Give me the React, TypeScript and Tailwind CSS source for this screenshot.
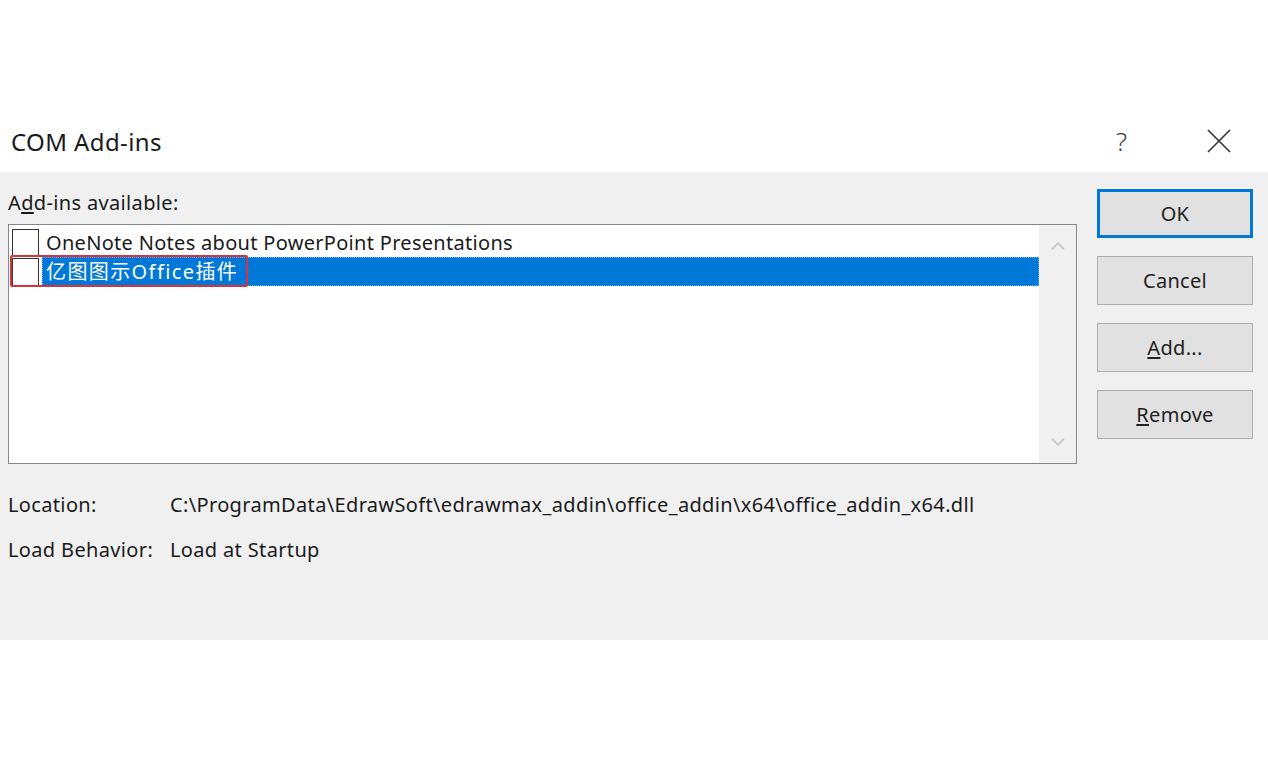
import { ChevronUp, ChevronDown } from 'lucide-react';

const font = { fontFamily: '"Noto Sans", "Noto Sans CJK SC", sans-serif' };

function Checkbox() {
  return <div className="w-[27px] h-[28px] border border-[#333] bg-white shrink-0" />;
}

function DialogButton({ children, primary }: { children: React.ReactNode; primary?: boolean }) {
  return (
    <button
      className={
        'w-[156px] h-[49px] bg-[#e1e1e1] text-[20px] tracking-[0.3px] text-[#222] flex items-center justify-center ' +
        (primary ? 'border-[3px] border-[#0078d7]' : 'border border-[#adadad]')
      }
    >
      {children}
    </button>
  );
}

export default function App() {
  return (
    <div className="w-[1268px] h-[760px] bg-white text-[#1a1a1a] flex flex-col" style={font}>
      {/* title bar */}
      <div className="h-[172px] flex items-end">
        <div className="h-[60px] w-full flex items-start pt-[15px] pl-[11px] pr-[36px]">
          <span className="text-[24px] tracking-[0.4px] leading-[30px]">COM Add-ins</span>
          <span className="ml-auto text-[26px] leading-[30px] text-[#444] font-light mr-[79px] -mt-[1px]">?</span>
          <svg width="26" height="26" viewBox="0 0 26 26" className="mt-[1px]">
            <path d="M2 2 L24 24 M24 2 L2 24" stroke="#333" strokeWidth="1.6" />
          </svg>
        </div>
      </div>

      {/* body */}
      <div className="h-[468px] bg-[#f0f0f0] flex flex-col pl-[8px]">
        <div className="flex">
          <div className="flex flex-col">
            <div className="h-[52px] flex items-end pb-[6px] text-[20px] tracking-[0.35px]">
              <span>
                A<span className="underline underline-offset-2">d</span>d-ins available:
              </span>
            </div>
            <div className="w-[1069px] h-[240px] border border-[#828790] bg-white flex">
              <div className="flex-1 flex flex-col pt-[3px] pl-[3px]">
                <div className="h-[29px] flex items-center gap-[7px]">
                  <Checkbox />
                  <span className="text-[20px] tracking-[0.3px] leading-none">
                    OneNote Notes about PowerPoint Presentations
                  </span>
                </div>
                <div className="h-[29px] flex items-center relative">
                  <Checkbox />
                  <div className="ml-[3px] flex-1 h-full bg-[#0078d7] text-white flex items-center pl-[3px] border border-dotted border-[#6aa8e0]">
                    <span className="text-[20px] tracking-[1.4px] leading-none">亿图图示Office插件</span>
                  </div>
                  <div className="absolute left-[-2px] top-[-2px] w-[238px] h-[32px] border-2 border-[#d8323a] rounded-[2px]" />
                </div>
              </div>
              <div className="w-[37px] bg-[#f0f0f0] flex flex-col items-center justify-between py-[10px]">
                <ChevronUp size={22} strokeWidth={2} color="#c8c8c8" />
                <ChevronDown size={22} strokeWidth={2} color="#c8c8c8" />
              </div>
            </div>
          </div>
          <div className="flex flex-col gap-[18px] pt-[17px] ml-[20px]">
            <DialogButton primary>OK</DialogButton>
            <DialogButton>Cancel</DialogButton>
            <DialogButton>
              <span><span className="underline underline-offset-2">A</span>dd...</span>
            </DialogButton>
            <DialogButton>
              <span><span className="underline underline-offset-2">R</span>emove</span>
            </DialogButton>
          </div>
        </div>

        <div className="mt-[27px] flex flex-col gap-[17px] text-[20px] tracking-[0.35px]">
          <div className="flex h-[28px] items-center">
            <span className="w-[162px]">Location:</span>
            <span>C:\ProgramData\EdrawSoft\edrawmax_addin\office_addin\x64\office_addin_x64.dll</span>
          </div>
          <div className="flex h-[28px] items-center">
            <span className="w-[162px]">Load Behavior:</span>
            <span>Load at Startup</span>
          </div>
        </div>
      </div>
    </div>
  );
}
